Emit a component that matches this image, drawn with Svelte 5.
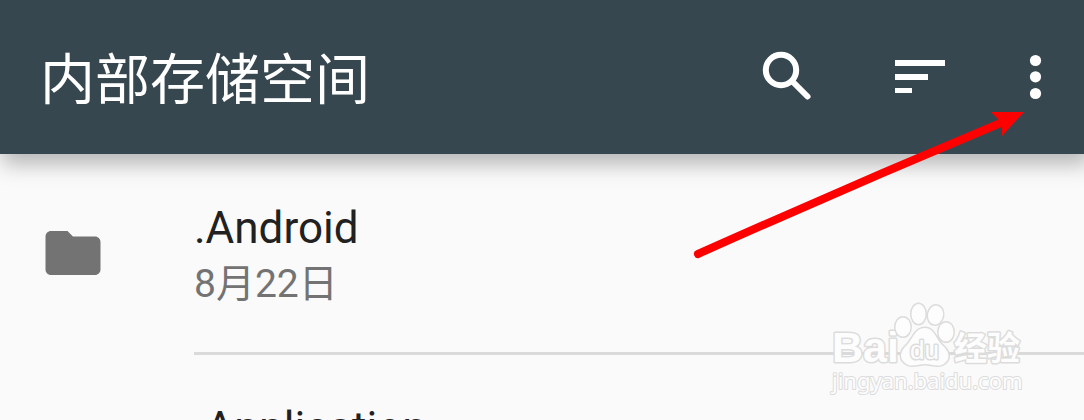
<!--
  Storage file browser
-->
<script>
  const title = '内部存储空间';

  const folders = [
    { name: '.Android', date: '8月22日' },
    { name: '.Application', date: '8月22日' }
  ];
</script>

<div class="browser">
  <header class="toolbar">
    <h1 class="title">{title}</h1>

    <div class="actions">
      <button class="action" aria-label="搜索">
        <svg width="66" height="66" viewBox="0 0 66 66" fill="none" stroke="#fff" stroke-width="6">
          <circle cx="26" cy="26" r="15.2" />
          <path d="M37 37L52.5 52.5" stroke-linecap="round" />
        </svg>
      </button>
      <button class="action" aria-label="排序">
        <svg width="66" height="66" viewBox="0 0 66 66" fill="#fff">
          <path d="M8 16h50v6H8zM8 30h33v6H8zM8 44h17v5H8z" />
        </svg>
      </button>
      <button class="action more" aria-label="更多选项">
        <svg width="66" height="66" viewBox="0 0 66 66" fill="#fff">
          <circle cx="33.5" cy="16.5" r="5.6" />
          <circle cx="33.5" cy="32.8" r="5.6" />
          <circle cx="33.5" cy="49.5" r="5.6" />
        </svg>
      </button>
    </div>
  </header>

  <ul class="list">
    {#each folders as folder}
      <li class="row">
        <svg class="folder-icon" width="66" height="66" viewBox="0 0 24 24" fill="#737373">
          <path
            d="M10 4H4c-1.1 0-1.99.9-1.99 2L2 18c0 1.1.9 2 2 2h16c1.1 0 2-.9 2-2V8c0-1.1-.9-2-2-2h-8l-2-2z"
          />
        </svg>
        <div class="info">
          <span class="name">{folder.name}</span>
          <span class="date">{folder.date}</span>
        </div>
      </li>
    {/each}
  </ul>

  <svg class="arrow" width="334" height="150" viewBox="0 0 334 150" aria-hidden="true">
    <path
      d="M8 144Q160 76 313 12"
      fill="none"
      stroke="#f00"
      stroke-width="8"
      stroke-linecap="round"
    />
    <path d="M301 2H334L312 26V16L308 9Z" fill="#f00" />
  </svg>

  <svg class="watermark" width="204" height="100" viewBox="0 0 204 100" aria-hidden="true">
    <g class="mark">
      <text class="latin" x="4" y="62">Bai</text>
      <ellipse cx="75" cy="27" rx="7.5" ry="9.5" />
      <ellipse cx="90.5" cy="14" rx="7" ry="10" />
      <ellipse cx="107.5" cy="15" rx="7.5" ry="9.5" transform="rotate(10 107.5 15)" />
      <ellipse cx="118" cy="32" rx="7.5" ry="9.5" />
      <path
        d="M97 28C87 28 85 39 79 45C72 51 71 58 77 63C83 68 90 64 97 64C104 64 111 68 117 63C123 58 121 51 114 45C108 39 106 28 97 28Z"
      />
      <text class="du" x="82" y="59">du</text>
      <text class="cjk" x="126" y="60">经验</text>
    </g>
    <text class="mark site" x="4" y="89">jingyan.baidu.com</text>
  </svg>
</div>

<style>
  :global(body) {
    margin: 0;
  }

  .browser {
    position: relative;
    height: 100vh;
    overflow: hidden;
    background: #fafafa;
    font-family: Roboto, 'Noto Sans CJK SC', sans-serif;
  }

  .toolbar {
    position: relative;
    display: flex;
    align-items: center;
    justify-content: space-between;
    height: 154px;
    padding-left: 40px;
    background: #37474f;
    box-shadow: 4px 8px 20px 2px rgba(0, 0, 0, 0.28);
  }

  .title {
    margin: 0;
    padding-top: 6px;
    font-size: 55px;
    font-weight: 400;
    line-height: 64px;
    color: #fff;
    white-space: nowrap;
  }

  .actions {
    display: flex;
  }

  .action {
    display: flex;
    align-items: center;
    justify-content: center;
    width: 132px;
    height: 132px;
    padding: 0;
    border: none;
    background: transparent;
    cursor: pointer;
  }

  .more {
    width: 98px;
  }

  .list {
    margin: 0;
    padding: 0;
    list-style: none;
  }

  .row {
    display: flex;
    align-items: center;
    height: 200px;
    padding-left: 40px;
  }

  .folder-icon {
    flex-shrink: 0;
    margin-right: 88px;
    margin-bottom: 2px;
  }

  .info {
    display: flex;
    flex: 1;
    flex-direction: column;
    justify-content: center;
    box-sizing: border-box;
    height: 201px;
    padding-top: 6px;
    border-bottom: 3px solid #dadada;
  }

  .name {
    font-size: 44px;
    line-height: 56px;
    color: #212121;
  }

  .date {
    font-size: 39px;
    line-height: 56px;
    color: #737373;
  }

  .arrow {
    position: absolute;
    top: 110px;
    right: 60px;
  }

  .watermark {
    position: absolute;
    top: 300px;
    right: 52px;
  }

  .mark {
    fill: #fdfdfd;
    stroke: #dcdcdc;
    stroke-width: 3px;
    stroke-linejoin: round;
    paint-order: stroke;
  }

  .latin {
    font: bold 43px 'Liberation Sans', sans-serif;
  }

  .du {
    font: 26px 'Liberation Sans', sans-serif;
  }

  .cjk {
    font: bold 33px 'Noto Sans CJK SC', sans-serif;
  }

  .site {
    font: 22px 'Noto Sans', sans-serif;
    stroke-width: 2px;
  }
</style>
